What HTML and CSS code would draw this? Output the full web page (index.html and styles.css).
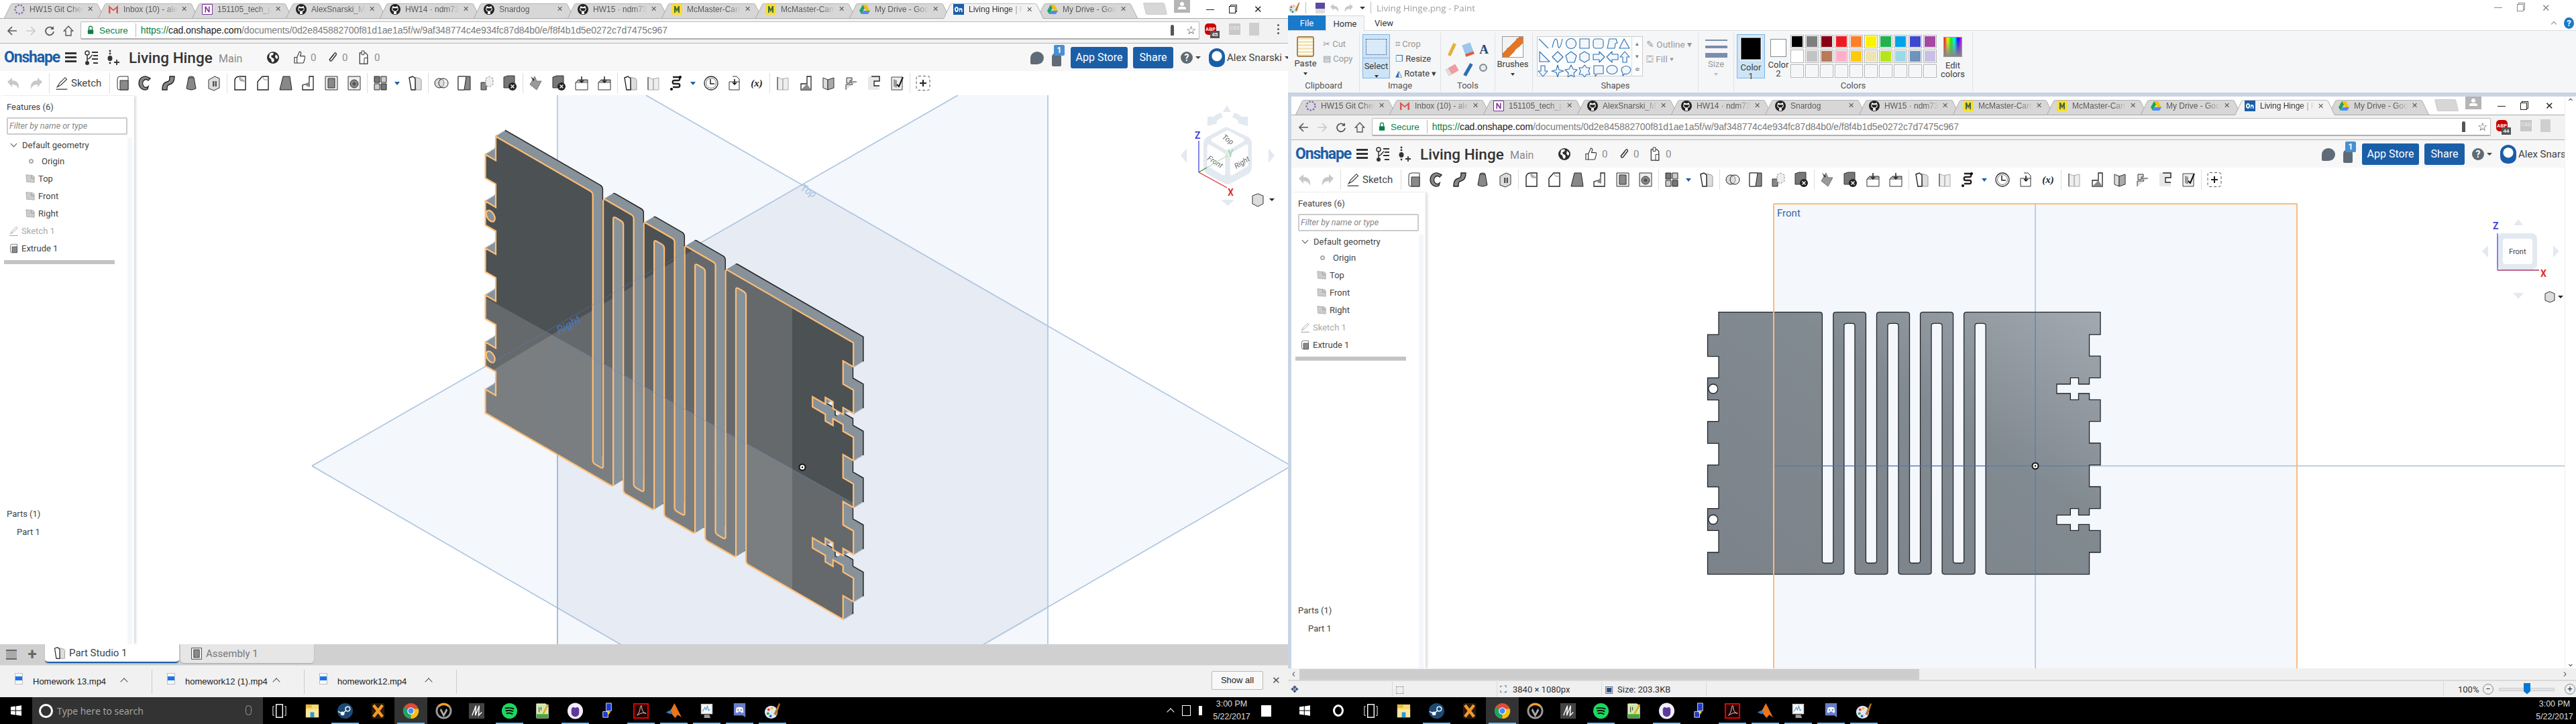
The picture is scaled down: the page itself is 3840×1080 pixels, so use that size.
FILE: index.html
```html
<!DOCTYPE html>
<html lang="en">
<head>
<meta charset="utf-8">
<title>Living Hinge</title>
<link rel="stylesheet" href="styles.css">
</head>
<body>
<svg class="defs" width="0" height="0">
<defs>
<linearGradient id="bodyGrad" x1="0" y1="1" x2="1" y2="0"><stop offset="0" stop-color="#7b8289"/><stop offset=".6" stop-color="#828a91"/><stop offset="1" stop-color="#a2a9b0"/></linearGradient>
<path id="hinge" transform="scale(.4337 .3333) translate(-143 -77)" vector-effect="non-scaling-stroke" fill-rule="evenodd" d="M143 77H489q10 0 10 10V1190q0 10 10 10H527q10 0 10-10V87q0-10 10-10H639q10 0 10 10V1190q0 10 10 10H676q10 0 10-10V87q0-10 10-10H789q10 0 10 10V1190q0 10 10 10H826q10 0 10-10V87q0-10 10-10H939q10 0 10 10V1190q0 10 10 10H976q10 0 10-10V87q0-10 10-10H1455V177H1417V273H1455V371H1417V399H1380V371H1352V399H1305V441H1352V469H1380V441H1417V469H1455V566H1417V663H1455V761H1417V858H1455V956H1417V985H1380V956H1352V985H1305V1027H1352V1054H1380V1027H1417V1054H1455V1152H1417V1250H1071q-10 0-10-10V137q0-10-10-10H1034q-10 0-10 10V1240q0 10-10 10H921q-10 0-10-10V137q0-10-10-10H884q-10 0-10 10V1240q0 10-10 10H771q-10 0-10-10V137q0-10-10-10H734q-10 0-10 10V1240q0 10-10 10H621q-10 0-10-10V137q0-10-10-10H584q-10 0-10 10V1240q0 10-10 10H105V1152H143V1054H105V956H143V859H105V761H143V664H105V566H143V470H105V371H143V275H105V177H143ZM108 420a16 21 0 1 0 32 0a16 21 0 1 0-32 0ZM108 1005a16 21 0 1 0 32 0a16 21 0 1 0-32 0Z"/>
<use id="isoFace" href="#hinge" transform="matrix(.937 .541 0 1.078 739 203.5)"/>
<clipPath id="faceClip"><use href="#hinge" transform="matrix(.937 .541 0 1.078 739 203.5)" clip-rule="evenodd"/></clipPath>

<symbol id="ext" viewBox="0 0 24 24"><path d="M4 6q0-4 4-4h12v20H7q-3 0-3-3z" fill="#fff" stroke="#333"/><path d="M8 8h12v14H8z" fill="#8a8a8a" stroke="#333"/></symbol>
<symbol id="rev" viewBox="0 0 24 24"><path d="M15 3a9 10 0 1 0 0 18l1-4a5 6 0 1 1 0-9l3-3z" fill="#888" stroke="#222" stroke-width="1.4"/></symbol>
<symbol id="swp" viewBox="0 0 24 24"><path d="M3 22c0-9 3-11 7-12s4-3 4-8h7c0 8-3 11-7 12s-4 3-4 8z" fill="#888" stroke="#222" stroke-width="1.4"/></symbol>
<symbol id="lft" viewBox="0 0 24 24"><ellipse cx="12" cy="4" rx="4" ry="2" fill="#bbb" stroke="#222"/><path d="M8 4 5 20q7 4 14 0L16 4z" fill="#888" stroke="#222"/></symbol>
<symbol id="thk" viewBox="0 0 24 24"><path d="M4 7l9-5 7 3v14l-8 4-8-3z" fill="#ddd" stroke="#333"/><path d="M10 9h6v8h-6z" fill="#555"/><path d="M13 9v8" stroke="#fff"/></symbol>
<symbol id="fil" viewBox="0 0 24 24"><path d="M4 22V9q0-7 7-7h9v20z" fill="#fff" stroke="#222" stroke-width="1.4"/><path d="M11 2v3q0 4 4 4h5" fill="#bbb" stroke="#888"/></symbol>
<symbol id="chm" viewBox="0 0 24 24"><path d="M4 22V10l7-8h9v20z" fill="#fff" stroke="#222" stroke-width="1.4"/><path d="M11 2l3 5h6" fill="none" stroke="#888"/></symbol>
<symbol id="drf" viewBox="0 0 24 24"><path d="M8 2h10l3 20H3z" fill="#888" stroke="#222"/></symbol>
<symbol id="rib" viewBox="0 0 24 24"><path d="M3 22V15l10-3V2h6v20z" fill="#fff" stroke="#222" stroke-width="1.3"/><path d="M8 16l6-10v12z" fill="#888"/></symbol>
<symbol id="shl" viewBox="0 0 24 24"><path d="M3 2h18v20H3z" fill="#eee" stroke="#333"/><path d="M7 5h10v14H7z" fill="#8a8a8a" stroke="#333"/></symbol>
<symbol id="hol" viewBox="0 0 24 24"><path d="M3 2h18v20H3z" fill="#eee" stroke="#333"/><circle cx="12" cy="13" r="6" fill="#888" stroke="#333"/><circle cx="12" cy="13" r="2.5" fill="#555"/></symbol>
<symbol id="grd" viewBox="0 0 24 24"><path d="M3 2h8v9H3z" fill="#777" stroke="#222"/><path d="M13 2h8v9h-8z" fill="#ccc" stroke="#222"/><path d="M3 13h8v9H3z" fill="#ccc" stroke="#222"/><path d="M13 13h8v9h-8z" fill="#777" stroke="#222"/></symbol>
<symbol id="prt" viewBox="0 0 24 24"><path d="M11 3l8 2q2 1 2 3v14h-8z" fill="#ddd" stroke="#999"/><path d="M3 4l5-2 4 3v17H6z" fill="#fff" stroke="#222" stroke-width="1.4"/></symbol>
<symbol id="boo" viewBox="0 0 24 24"><circle cx="9" cy="12" r="7" fill="#ddd" stroke="#222"/><circle cx="15" cy="12" r="7" fill="#ddd" fill-opacity=".5" stroke="#222"/></symbol>
<symbol id="spl" viewBox="0 0 24 24"><path d="M3 2h18v20H3z" fill="#888" stroke="#222"/><path d="M3 2h12l-3 20H3z" fill="#fff" stroke="#222"/></symbol>
<symbol id="xfm" viewBox="0 0 24 24"><path d="M3 11h8v11H3z" fill="#888" stroke="#333"/><path d="M10 5l5-3 6 3v9l-6 4-5-3z" fill="#eee" stroke="#888" stroke-dasharray="3 2"/></symbol>
<symbol id="del" viewBox="0 0 24 24"><path d="M3 3l6-2h10v18H3z" fill="#777" stroke="#333"/><circle cx="16" cy="17" r="6" fill="#222"/><path d="M13.500 14.500l5 5m0-5l-5 5" stroke="#fff" stroke-width="1.4"/></symbol>
<symbol id="bnd" viewBox="0 0 24 24"><path d="M3 14l7-12 3 7 7 0-7 13z" fill="#999" stroke="#777"/><path d="M4 2l6 5-2 2z" fill="#333"/></symbol>
<symbol id="imp" viewBox="0 0 24 24"><path d="M3 11h18v11H3z" fill="#fff" stroke="#333"/><path d="M3 11l4-4h14v4" fill="#aaa" stroke="#333"/><path d="M12 2v9m-3-3 3 3 3-3" stroke="#222" fill="none" stroke-width="1.5"/></symbol>
<symbol id="plk" viewBox="0 0 24 24"><path d="M4 22V3l6 3 10-2v18z" fill="#eee" stroke="#aaa"/><path d="M4 3v19" stroke="#333"/><path d="M12 6v16" stroke="#888"/></symbol>
<symbol id="ser" viewBox="0 0 24 24"><path d="M7 3h8c3 0 3 5 0 5H9c-3 0-3 5 0 5h6c3 0 3 5 0 5H7" fill="none" stroke="#222" stroke-width="2.4"/><circle cx="5" cy="21" r="2"/><circle cx="18" cy="3" r="2"/></symbol>
<symbol id="clk" viewBox="0 0 24 24"><circle cx="12" cy="12" r="10" fill="#fff" stroke="#333" stroke-width="1.3"/><circle cx="12" cy="12" r="7.500" fill="none" stroke="#777"/><path d="M11 6v7h6" fill="none" stroke="#222" stroke-width="1.5"/></symbol>
<symbol id="mat" viewBox="0 0 24 24"><path d="M5 10h15v12H5z" fill="#fff" stroke="#333"/><path d="M10 2h6l4 4v5" fill="none" stroke="#333"/><path d="M13 6v8m-3-3 3 3 3-3" stroke="#111" stroke-width="1.5" fill="none"/></symbol>
<symbol id="smb" viewBox="0 0 24 24"><path d="M4 4l7 3v15l-7-3z" fill="#ddd" stroke="#333"/><path d="M11 7l9-3v15l-9 3z" fill="#aaa" stroke="#333"/></symbol>
<symbol id="cnr" viewBox="0 0 24 24"><path d="M5 13h9V2h6v20H5z" fill="#fff" stroke="#222" stroke-width="1.3"/><path d="M14 13l6 9H5z" fill="#888"/></symbol>
<symbol id="tab" viewBox="0 0 24 24"><path d="M5 12V4h8v4h-3v4zM4 22v-8h10l-3-4h9" fill="#e2e2e2" stroke="#333"/></symbol>
<symbol id="hem" viewBox="0 0 24 24"><path d="M3 2h17v7H11v6h9v7H3z" fill="#e8e8e8"/><path d="M8 2h12v7h-8v7h8" fill="none" stroke="#222" stroke-width="1.4"/></symbol>
<symbol id="cut" viewBox="0 0 24 24"><path d="M4 3h16v19H4z" fill="#eee" stroke="#444"/><path d="M7 6l5 2 0 11-5-2z" fill="#999"/><path d="M12 14l3 3 6-14" fill="none" stroke="#111" stroke-width="2"/></symbol>
<symbol id="plus" viewBox="0 0 24 24"><rect x="2" y="1.500" width="20" height="21" rx="3" fill="none" stroke="#555" stroke-dasharray="4 3"/><path d="M12 7v10M7 12h10" stroke="#222" stroke-width="2"/></symbol>
<symbol id="pen" viewBox="0 0 24 24"><path d="M4 19 8 12 18 2l3 3L11 15z" fill="none" stroke="#333" stroke-width="1.3"/><path d="M2 23h20" stroke="#333" stroke-width="1.5"/></symbol>
<symbol id="undo" viewBox="0 0 24 24"><path d="M3 10l7-6v4c7 0 11 4 10 13-2-5-5-7-10-7v4z" fill="#c8c8c8"/></symbol>
<symbol id="redo" viewBox="0 0 24 24"><path d="M21 10l-7-6v4C7 8 3 12 4 21c2-5 5-7 10-7v4z" fill="#c8c8c8"/></symbol>
<symbol id="plane" viewBox="0 0 16 16"><path d="M1 2l11 1 3 2v10L2 14z" fill="#ccc" stroke="#aaa"/><path d="M10 3v5h5" fill="none" stroke="#999"/></symbol>
<symbol id="tre" viewBox="0 0 22 24"><circle cx="5" cy="5" r="3" fill="none" stroke="#333" stroke-width="1.500"/><circle cx="5" cy="20" r="3" fill="#333"/><path d="M5 8v9M5 14c5 0 5-5 8-6" fill="none" stroke="#333" stroke-width="1.500"/><path d="M12 4h9M14 9h7M12 14h9M14 20h7" stroke="#333" stroke-width="1.800"/></symbol>
<symbol id="dpl" viewBox="0 0 22 24"><circle cx="6" cy="2" r="1.400" fill="#333"/><circle cx="6" cy="6" r="1.400" fill="#333"/><ellipse cx="6" cy="13" rx="3.500" ry="4" fill="#333"/><circle cx="6" cy="20" r="1.400" fill="#333"/><path d="M16 15v8M12 19h8" stroke="#333" stroke-width="1.800"/></symbol>
<symbol id="glb" viewBox="0 0 18 18"><circle cx="9" cy="9" r="9" fill="#2e2e2e"/><path d="M4 3q3-2 6-1l-1 3-3 1 1 3 3 1 1 3-2 3-2-1-1-4-3-2zM13 4l3 3v3l-2 1-2-3z" fill="#fff"/></symbol>
<symbol id="thb" viewBox="0 0 18 22"><path d="M1 11h4v9H1zM5 11l4-9c2 0 3 2 2 4l-1 3h6c1.500 0 2 1 1.500 3l-2 7c-.3 1-1 1-2 1H5" fill="#fff" stroke="#333" stroke-width="1.200"/></symbol>
<symbol id="lnk" viewBox="0 0 16 22"><path d="M3 15 11 5c2-2 4 0 3 2l-7 9c-2 2-4 0-3-2l6-7" fill="none" stroke="#333" stroke-width="1.500"/></symbol>
<symbol id="clp" viewBox="0 0 16 22"><path d="M2 4h9l3 3v14H2z" fill="#fff" stroke="#333" stroke-width="1.300"/><path d="M5 1h4v6H5zM9 12h5v9H9z" fill="#fff" stroke="#333"/></symbol>

<symbol id="gh" viewBox="0 0 16 16"><circle cx="8" cy="8" r="8" fill="#222"/><path d="M3.500 6l1-3 2.500 1.200h2L11.500 3l1 3c1 3-1 5-3 5.300l.5 1V15H6v-2.700l.5-1C4.500 11 2.500 9 3.500 6z" fill="#fff"/><path d="M4.200 6.200c-.3 2.800 1.500 4.400 3.800 4.400s4.100-1.600 3.800-4.400z" fill="#222"/></symbol>
<symbol id="drv" viewBox="0 0 16 16"><path d="M5 1h6l5 9h-6z" fill="#f4c20d"/><path d="M5 1 0 10l3 5 5-9z" fill="#1da462"/><path d="M3 15h10l3-5H6z" fill="#4c8bf5"/></symbol>
<symbol id="mcm" viewBox="0 0 16 16"><rect width="16" height="16" rx="3" fill="#fddc2f"/><path d="M4 13V3h2l2 5 2-5h2v10h-2V8l-2 4-2-4v5z" fill="#3a6a3a"/></symbol>
<symbol id="gml" viewBox="0 0 16 16"><path d="M1 14V2l7 6 7-6v12h-2.500V6.500L8 10.500 3.500 6.500V14z" fill="#d9584e"/></symbol>
<symbol id="one" viewBox="0 0 16 16"><path d="M.5.500h15v15H.5z" fill="#fff" stroke="#7a2f95"/><path d="M4.500 12.500v-9H6l4 6v-6h1.500v9H10l-4-6v6z" fill="#7a2f95"/></symbol>
<symbol id="git" viewBox="0 0 16 16"><circle cx="8" cy="8" r="6.500" fill="none" stroke="#7b5bb5" stroke-width="2" stroke-dasharray="2.500 2"/></symbol>
<symbol id="ons" viewBox="0 0 16 16"><rect width="16" height="16" fill="#1b5ea8"/><path d="M5 4a3 4 0 1 0 .01 0zM5 6a1.200 2 0 1 1-.01 0z" fill="#fff"/><path d="M9 12V6h1.500v1c1-1.500 3-1 3 1v4h-1.500V9c0-1-1.500-1-2 0v3z" fill="#fff"/></symbol>
<symbol id="back" viewBox="0 0 16 16"><path d="M15 8H3m5-6L2 8l6 6" fill="none" stroke="currentColor" stroke-width="1.700"/></symbol>
<symbol id="fwd" viewBox="0 0 16 16"><path d="M1 8h12M8 2l6 6-6 6" fill="none" stroke="currentColor" stroke-width="1.700"/></symbol>
<symbol id="rel" viewBox="0 0 16 16"><path d="M13 5a6 6 0 1 0 1 4" fill="none" stroke="currentColor" stroke-width="1.800"/><path d="M14 1v5H9z" fill="currentColor"/></symbol>
<symbol id="hom" viewBox="0 0 16 16"><path d="M8 1 1.500 8H4v7h8V8h2.500z" fill="none" stroke="currentColor" stroke-width="1.400"/></symbol>
<symbol id="lock" viewBox="0 0 12 16"><path d="M3 7V4a3 3 0 0 1 6 0v3" fill="none" stroke="#0b8043" stroke-width="1.500"/><rect x="1" y="7" width="10" height="8" rx="1" fill="#0b8043"/></symbol>

<symbol id="win" viewBox="0 0 16 16"><path d="M0 2.500 6.800 1.500v6H0zM7.800 1.400 16 .2v7.300H7.800zM0 8.500h6.800v6L0 13.500zM7.800 8.500H16v7.300l-8.200-1.200z" fill="#fff"/></symbol>
<symbol id="tv" viewBox="0 0 26 26"><rect x="8" y="3" width="10" height="20" fill="none" stroke="#fff" stroke-width="1.500"/><path d="M5 6H3v14h2M21 6h2v14h-2" fill="none" stroke="#fff"/></symbol>
<symbol id="exp" viewBox="0 0 26 26"><path d="M3 3h20v20H3z" fill="#f8d775"/><path d="M3 3h9v5H3z" fill="#e8b93c"/><path d="M3 10h20v13H3z" fill="#ffe79a"/><path d="M10 15h6v8h-6z" fill="#2b9ad7"/></symbol>
<symbol id="stm" viewBox="0 0 26 26"><circle cx="13" cy="13" r="12" fill="#1c4a75"/><circle cx="17" cy="10" r="3.500" fill="none" stroke="#fff" stroke-width="1.500"/><circle cx="9" cy="17" r="3" fill="#fff"/><path d="M2 14l7 3 6-5" fill="none" stroke="#fff" stroke-width="1.500"/></symbol>
<symbol id="xxx" viewBox="0 0 26 26"><rect x="3" y="1" width="20" height="24" rx="2" fill="#2a1a0a"/><path d="M6 4l14 18M20 4 6 22" stroke="#f39a2b" stroke-width="4.500"/></symbol>
<symbol id="chr" viewBox="0 0 26 26"><circle cx="13" cy="13" r="12" fill="#dd4b39"/><path d="M13 13 2.500 19A12 12 0 0 0 13 25z" fill="#1da462"/><path d="M13 13 13 25A12 12 0 0 0 24.800 10H13z" fill="#f4c20d"/><path d="M13 13 2.600 7A12 12 0 0 0 2.500 19z" fill="#1da462"/><circle cx="13" cy="13" r="5.500" fill="#fff"/><circle cx="13" cy="13" r="4.300" fill="#4c8bf5"/></symbol>
<symbol id="ovw" viewBox="0 0 26 26"><circle cx="13" cy="13" r="11" fill="none" stroke="#999" stroke-width="3"/><path d="M5 6a11 11 0 0 1 16 0" fill="none" stroke="#f99e1a" stroke-width="3"/><path d="M9 9l4 8 4-8 2 3-6 11-6-11z" fill="#aaa"/></symbol>
<symbol id="wac" viewBox="0 0 26 26"><rect x="1" y="1" width="24" height="24" fill="#444"/><path d="M6 20 12 5l-1 15 6-15-1 15 5-5" fill="none" stroke="#fff" stroke-width="1.500"/></symbol>
<symbol id="spo" viewBox="0 0 26 26"><circle cx="13" cy="13" r="12" fill="#1ed760"/><path d="M6 9q7-2 14 1M7 13q6-2 12 1M8 17q5-1.500 10 1" fill="none" stroke="#111" stroke-width="2"/></symbol>
<symbol id="ntp" viewBox="0 0 26 26"><path d="M4 2h14l4 4v18H4z" fill="#cfe8a8" stroke="#fff"/><path d="M4 18h18v6H4z" fill="#4aa53a"/><path d="M14 18 22 3" stroke="#e8a71c" stroke-width="2.500"/><path d="M8 7v8M11 7v5" stroke="#333"/></symbol>
<symbol id="pur" viewBox="0 0 26 26"><ellipse cx="13" cy="13" rx="12" ry="12.500" fill="#f2eefb"/><path d="M7 10l2-3 4 1 4-1 2 3v6a6 6 0 0 1-12 0z" fill="#5b3a99"/></symbol>
<symbol id="net" viewBox="0 0 26 26"><path d="M10 1h8v12h-8z" fill="#1b3bd0" stroke="#ddd"/><path d="M5 14h8v9H5z" fill="#1b3bd0" stroke="#ddd"/><path d="M15 11l-4 5h3l-2 5 5-7h-3z" fill="#ffe100"/></symbol>
<symbol id="acr" viewBox="0 0 26 26"><rect x="2" y="2" width="22" height="22" fill="#200" stroke="#e00" stroke-width="2"/><path d="M13 5c-2 0 0 8-6 15 5-4 11-5 14-3-5-1-7-6-7-12z" fill="none" stroke="#ddd"/></symbol>
<symbol id="mlb" viewBox="0 0 26 26"><path d="M1 15l7-3 6-11 4 8 7 14-6-4-4 5-6-7z" fill="#e8761d"/><path d="M1 15l7-3 3 4-4 2z" fill="#2f7ec5"/></symbol>
<symbol id="rmn" viewBox="0 0 26 26"><path d="M4 2h18v16H4z" fill="#ddd"/><path d="M6 4h14v12H6z" fill="#fff"/><path d="M7 14l3-7 2 5 2-7 2 8 2-3" fill="none" stroke="#2b7fc1"/><path d="M9 19h8l2 5H9z" fill="#999"/></symbol>
<symbol id="dsc" viewBox="0 0 26 26"><path d="M4 1h18v22l-4-3H4z" fill="#6a7fc9"/><path d="M8 8q5-2 10 0l1 7-3 1-1-2h-4l-1 2-3-1z" fill="#fff"/><circle cx="10.500" cy="11.500" r="1.300" fill="#6a7fc9"/><circle cx="15.500" cy="11.500" r="1.300" fill="#6a7fc9"/></symbol>
<symbol id="pnt" viewBox="0 0 26 26"><ellipse cx="11" cy="15" rx="10" ry="10" fill="#dfe7f2"/><circle cx="7" cy="11" r="2" fill="#e33"/><circle cx="12" cy="9" r="2" fill="#fb3"/><circle cx="6" cy="17" r="2" fill="#2a4"/><circle cx="10" cy="21" r="2" fill="#26c"/><path d="M15 18 23 1l2 1-6 18z" fill="#b5762a"/></symbol>
</defs>
</svg>

<div class="screen">

<!-- LEFT WINDOW -->
<div class="win">
 <div class="chrome">
  <div class="tabs">
   <div class="tab"><svg class="fav"><use href="#git"/></svg><span class="tt">HW15 Git Chec</span><span class="tx">✕</span></div>
   <div class="tab"><svg class="fav"><use href="#gml"/></svg><span class="tt">Inbox (10) - ale</span><span class="tx">✕</span></div>
   <div class="tab"><svg class="fav"><use href="#one"/></svg><span class="tt">151105_tech_p</span><span class="tx">✕</span></div>
   <div class="tab"><svg class="fav"><use href="#gh"/></svg><span class="tt">AlexSnarski_ME</span><span class="tx">✕</span></div>
   <div class="tab"><svg class="fav"><use href="#gh"/></svg><span class="tt">HW14 · ndm73</span><span class="tx">✕</span></div>
   <div class="tab"><svg class="fav"><use href="#gh"/></svg><span class="tt">Snardog</span><span class="tx">✕</span></div>
   <div class="tab"><svg class="fav"><use href="#gh"/></svg><span class="tt">HW15 · ndm73</span><span class="tx">✕</span></div>
   <div class="tab"><svg class="fav"><use href="#mcm"/></svg><span class="tt">McMaster-Carr</span><span class="tx">✕</span></div>
   <div class="tab"><svg class="fav"><use href="#mcm"/></svg><span class="tt">McMaster-Carr</span><span class="tx">✕</span></div>
   <div class="tab"><svg class="fav"><use href="#drv"/></svg><span class="tt">My Drive - Goo</span><span class="tx">✕</span></div>
   <div class="tab active"><svg class="fav"><use href="#ons"/></svg><span class="tt">Living Hinge | F</span><span class="tx">✕</span></div>
   <div class="tab"><svg class="fav"><use href="#drv"/></svg><span class="tt">My Drive - Goo</span><span class="tx">✕</span></div>
   <div class="newtab"></div>
   <div class="profile"><span class="phead"></span><span class="pbody"></span></div>
   <div class="winbtns"><span class="wmin"></span><span class="wmax"></span><span class="wx">✕</span></div>
  </div>
  <div class="addr">
   <svg class="nav"><use href="#back"/></svg><svg class="nav off"><use href="#fwd"/></svg><svg class="nav"><use href="#rel"/></svg><svg class="nav"><use href="#hom"/></svg>
   <div class="omni">
    <svg class="lock"><use href="#lock"/></svg><span class="secure">Secure</span><span class="usep"></span>
    <span class="url"><b class="g">https://</b><b class="d">cad.onshape.com</b>/documents/0d2e845882700f81d1ae1a5f/w/9af348774c4e934fc87d84b0/e/f8f4b1d5e0272c7d7475c967</span>
    <span class="key"></span><span class="star">☆</span>
   </div>
   <div class="ext"><span class="abp">ABP<i>45</i></span><span class="css">CSS</span><span class="pdf"></span><span class="dots"></span></div>
  </div>
  <div class="ohead">
   <span class="logo">Onshape</span>
   <span class="burger"></span>
   <svg class="hi"><use href="#tre"/></svg>
   <svg class="hi"><use href="#dpl"/></svg>
   <span class="doc">Living Hinge</span><span class="main">Main</span>
   <svg class="globe"><use href="#glb"/></svg>
   <svg class="thumb"><use href="#thb"/></svg><span class="cnt">0</span>
   <svg class="link"><use href="#lnk"/></svg><span class="cnt">0</span>
   <svg class="clip"><use href="#clp"/></svg><span class="cnt">0</span>
   <div class="oright">
    <span class="chat"></span>
    <span class="bell"><i>1</i></span>
    <span class="obtn">App Store</span><span class="obtn share">Share</span>
    <span class="help">?</span><span class="caret"></span>
    <span class="avatar"></span><span class="user">Alex Snarski</span><span class="caret"></span>
   </div>
  </div>
  <div class="tools">
   <svg class="ti"><use href="#undo"/></svg><svg class="ti"><use href="#redo"/></svg><i class="sep"></i>
   <span class="sk"><svg class="skp"><use href="#pen"/></svg>Sketch</span><i class="sep"></i>
   <svg class="ti"><use href="#ext"/></svg><svg class="ti"><use href="#rev"/></svg><svg class="ti"><use href="#swp"/></svg><svg class="ti"><use href="#lft"/></svg><svg class="ti"><use href="#thk"/></svg><i class="sep"></i>
   <svg class="ti"><use href="#fil"/></svg><svg class="ti"><use href="#chm"/></svg><svg class="ti"><use href="#drf"/></svg><svg class="ti"><use href="#rib"/></svg><svg class="ti"><use href="#shl"/></svg><svg class="ti"><use href="#hol"/></svg><i class="sep"></i>
   <svg class="ti"><use href="#grd"/></svg><span class="bc"></span><svg class="ti"><use href="#prt"/></svg><i class="sep"></i>
   <svg class="ti"><use href="#boo"/></svg><svg class="ti"><use href="#spl"/></svg><svg class="ti"><use href="#xfm"/></svg><svg class="ti"><use href="#del"/></svg><i class="sep"></i>
   <svg class="ti"><use href="#bnd"/></svg><svg class="ti"><use href="#del"/></svg><svg class="ti"><use href="#imp"/></svg><svg class="ti"><use href="#imp"/></svg><i class="sep"></i>
   <svg class="ti"><use href="#prt"/></svg><svg class="ti"><use href="#plk"/></svg><svg class="ti"><use href="#ser"/></svg><span class="bc"></span><svg class="ti"><use href="#clk"/></svg><svg class="ti"><use href="#mat"/></svg><span class="ti fx">(x)</span><i class="sep"></i>
   <svg class="ti"><use href="#plk"/></svg><svg class="ti"><use href="#cnr"/></svg><svg class="ti"><use href="#smb"/></svg><svg class="ti"><use href="#tab"/></svg><svg class="ti"><use href="#hem"/></svg><svg class="ti"><use href="#cut"/></svg><i class="sep"></i>
   <svg class="ti"><use href="#plus"/></svg>
  </div>
  <div class="viewport">
   <svg class="canvas" viewBox="0 142 1920 819" width="1920" height="819">
    <rect x="831" y="142" width="731" height="819" fill="#f4f7fb"/>
    <path d="M963 142H1428L1196 275Z" fill="#fff"/>
    <path d="M465 695 1196 275 1925 695 1196 1118Z" fill="#f4f7fb"/>
    <path d="M831 484.500 1196 275 1562 485V908L1196 1118 831 908Z" fill="#e6ebf4"/>
    <g fill="none" stroke="#a8c1df" stroke-width="1.500"><path d="M465 695 1428 142M963 142 1925 695M465 695 1196 1118 1925 695M831 142V961M1562 142V961"/></g>
    <text class="pl" transform="translate(1192 283) rotate(30)" fill="#9db8da">Top</text>

    <g fill="#88929a" stroke="#88929a" stroke-width="1.500">
     <use href="#isoFace" x="14.700" y="-8.900" stroke="#222"/>
     <use href="#isoFace" x="12.900" y="-7.800"/><use href="#isoFace" x="11" y="-6.700"/><use href="#isoFace" x="9.200" y="-5.600"/><use href="#isoFace" x="7.400" y="-4.500"/><use href="#isoFace" x="5.500" y="-3.300"/><use href="#isoFace" x="3.700" y="-2.200"/><use href="#isoFace" x="1.800" y="-1.100"/>
    </g>
    <use href="#isoFace" fill="#4c5154" stroke="none"/>
    <g clip-path="url(#faceClip)" fill="#fff" fill-opacity=".14">
     <path d="M700 573 1181 284V1000H700Z"/>
     <path d="M700 431 1420 833V1000H700Z"/>
    </g>
    <use href="#isoFace" fill="none" stroke="#ffbe74" stroke-width="2.200"/>
    <path d="M723 547 1022 375M815 496 1270 750M831 496V961" fill="none" stroke="#5b84bd" stroke-opacity=".45"/>
    <text class="pl rgt" transform="translate(834 499) rotate(-30)">Right</text>
    <circle cx="1196" cy="697" r="4.500" fill="#fff" stroke="#111" stroke-width="2"/><circle cx="1196" cy="697" r="1.300" fill="#111"/>

    <g class="vc">
     <path d="M1829 157l6 10h-12zM1760 232l9-11v22zM1900 232l-9-11v22zM1830 307l-10-9h20z" fill="#e3e9f0"/>
     <path d="M1800 192v-14h9l-2 3q5-7 13-9l3 7q-7 2-10 7l2 2zM1860 192v-14h-9l2 3q-5-7-13-9l-3 7q7 2 10 7l-2 2z" fill="#e3e9f0" transform="translate(0 -4)"/>
     <path d="M1830 190l30 14q6 4 6 10v36q0 6-6 10l-26 14q-4 2-8 0l-26-14q-6-4-6-10v-36q0-6 6-10l26-14q2-1 4 0z" fill="#e3e9f0"/>
     <path d="M1830 197l22 12-22 13-22-13zM1802 218l22 13v28l-22-13zM1858 218l-22 13v28l22-13z" fill="#fff" stroke="#fff" stroke-width="5" stroke-linejoin="round"/>
     <text class="vct" transform="translate(1821 206) rotate(35)">Top</text>
     <text class="vct" transform="translate(1799 238) rotate(32)">Front</text>
     <text class="vct" transform="translate(1843 252) rotate(-32)">Right</text>
     <path d="M1787 257V210" stroke="#4444dd" stroke-width="1.300"/><path d="M1787 257 1829 280" stroke="#e02b2b" stroke-width="1.300"/><path d="M1787 257 1799 250" stroke="#2a9a2a" stroke-width="1.300"/><path d="M1799 250 1830 232" stroke="#b8e0b8" stroke-width="1.300"/>
     <text class="axs" x="1781" y="207" fill="#4444dd">Z</text><text class="axs" x="1830" y="234" fill="#a8d8a8">Y</text><text class="axs" x="1830" y="292" fill="#e02b2b">X</text>
     <path d="M1867 292l8-3 8 3v12l-8 4-8-4z" fill="#ddd" stroke="#333"/><path d="M1892 296h8l-4 4z" fill="#222"/>
    </g>
   </svg>
   <aside class="side">
    <div class="sh">Features (6)</div>
    <div class="filter">Filter by name or type</div>
    <div class="scrl"></div>
    <div class="row first"><span class="chev"></span>Default geometry</div>
    <div class="row sub"><i class="orig"></i>Origin</div>
    <div class="row sub"><svg class="pi"><use href="#plane"/></svg>Top</div>
    <div class="row sub"><svg class="pi"><use href="#plane"/></svg>Front</div>
    <div class="row sub"><svg class="pi"><use href="#plane"/></svg>Right</div>
    <div class="row top dim"><svg class="fi"><use href="#pen"/></svg>Sketch 1</div>
    <div class="row top"><svg class="fi"><use href="#ext"/></svg>Extrude 1</div>
    <div class="hbar"></div>
    <div class="parts">Parts (1)</div>
    <div class="row part">Part 1</div>
   </aside>
  </div>
  <div class="sheets">
   <span class="sq"></span><span class="sp">+</span>
   <div class="stab on"><svg class="si"><use href="#prt"/></svg>Part Studio 1</div>
   <div class="stab"><svg class="si"><use href="#shl"/></svg>Assembly 1</div>
  </div>
  <div class="dl">
   <div class="dli"><span class="file"></span><span class="dn">Homework 13.mp4</span><span class="up"></span></div>
   <div class="dli"><span class="file"></span><span class="dn">homework12 (1).mp4</span><span class="up"></span></div>
   <div class="dli"><span class="file"></span><span class="dn">homework12.mp4</span><span class="up"></span></div>
   <span class="showall">Show all</span><span class="dlx">✕</span>
  </div>
 </div>
 <div class="taskbar">
  <span class="tk"><svg class="wi"><use href="#win"/></svg></span>
  <div class="search"><span class="cort"></span><span class="stxt">Type here to search</span><span class="mic"></span></div>
  <span class="tk"><svg><use href="#tv"/></svg></span>
  <span class="tk"><svg><use href="#exp"/></svg></span>
  <span class="tk run"><svg><use href="#stm"/></svg></span>
  <span class="tk"><svg><use href="#xxx"/></svg></span>
  <span class="tk run cur"><svg><use href="#chr"/></svg></span>
  <span class="tk"><svg><use href="#ovw"/></svg></span>
  <span class="tk"><svg><use href="#wac"/></svg></span>
  <span class="tk run"><svg><use href="#spo"/></svg></span>
  <span class="tk"><svg><use href="#ntp"/></svg></span>
  <span class="tk run"><svg><use href="#pur"/></svg></span>
  <span class="tk"><svg><use href="#net"/></svg></span>
  <span class="tk run"><svg><use href="#acr"/></svg></span>
  <span class="tk run"><svg><use href="#mlb"/></svg></span>
  <span class="tk run"><svg><use href="#rmn"/></svg></span>
  <span class="tk run"><svg><use href="#dsc"/></svg></span>
  <span class="tk run"><svg><use href="#pnt"/></svg></span>
  <div class="tray"><span class="tup"></span><span class="tnet"></span><span class="tvol"></span><div class="clock"><span>3:00 PM</span><span>5/22/2017</span></div><span class="note"></span></div>
 </div>
</div>

<!-- RIGHT WINDOW: PAINT -->
<div class="win paint">
 <div class="ptitle">
  <svg class="qa"><use href="#pnt"/></svg><i class="qs"></i>
  <span class="qsave"></span><svg class="qb"><use href="#undo"/></svg><svg class="qb"><use href="#redo"/></svg><span class="qc"></span><i class="qs"></i>
  <span class="pname">Living Hinge.png - Paint</span>
  <div class="pctl"><span class="wmin"></span><span class="wmax"></span><span class="wx">✕</span></div>
 </div>
 <div class="rtabs"><span class="file-tab">File</span><span class="rt on">Home</span><span class="rt">View</span><span class="rup"></span><span class="rq">?</span></div>
 <div class="ribbon">
  <section class="grp g1">
   <div class="gb clipb">
    <div class="big"><span class="paste"></span><span>Paste</span><i class="dn2"></i></div>
    <div class="small dimt"><div>✂ Cut</div><div>▤ Copy</div></div>
   </div>
   <label>Clipboard</label>
  </section>
  <section class="grp g2">
   <div class="gb">
    <div class="sel"><div class="selt"><span></span></div><div class="selb">Select<i class="dn2"></i></div></div>
    <div class="small"><div class="dimt">⌗ Crop</div><div><span class="ib">❐</span> Resize</div><div><span class="ib">◭</span> Rotate ▾</div></div>
   </div>
   <label>Image</label>
  </section>
  <section class="grp g3">
   <div class="gb toolgrid"><span class="c-pen"></span><span class="c-fill"></span><span class="c-a">A</span><span class="c-era"></span><span class="c-drop"></span><span class="c-mag"></span></div>
   <label>Tools</label>
  </section>
  <section class="grp g4">
   <div class="gb"><div class="big"><span class="brush"></span><span>Brushes</span><i class="dn2"></i></div></div>
   <label>&nbsp;</label>
  </section>
  <section class="grp g5">
   <div class="gb">
    <div class="gallery">
     <svg class="shapes" viewBox="0 0 140 60" width="140" height="60"><g fill="#f3f7fc" stroke="#2a6fb0" stroke-width="1.100" stroke-linejoin="round">
      <path d="M2 3 16 17" fill="none"/><path d="M22 16c3-16 7-16 8-6s4 8 7-7" fill="none"/><circle cx="50" cy="10" r="7.500"/><rect x="63" y="3" width="14" height="14"/><rect x="83" y="3" width="15" height="14" rx="4"/><path d="M104 17l3-14h10l2 6-3 1-1 7z"/><path d="M131 3l8 14h-15z" transform="translate(-2 0)"/>
      <path d="M3 22v15h15z"/><path d="M30 22l8 8-8 8-8-8z"/><path d="M50 22l8 6-3 10H45l-3-10z"/><path d="M70 22l7 4v8l-7 4-7-4v-8z"/><path d="M83 26h9v-4l8 8-8 8v-4h-9z"/><path d="M120 26h-9v-4l-8 8 8 8v-4h9z"/><path d="M130 22l7 8h-4v8h-6v-8h-4z"/>
      <path d="M5 43h6v8h4l-7 8-7-8h4z"/><path d="M30 42l2 7 7 2-7 2-2 7-2-7-7-2 7-2z"/><path d="M50 42l3 6 6 1-5 5 1 6-5-3-5 3 1-6-5-5 6-1z"/><path d="M70 42l3 4h5l-2 5 2 5h-5l-3 4-3-4h-5l2-5-2-5h5z"/><path d="M84 43h14v12h-9l-3 4v-4h-2z"/><ellipse cx="111" cy="49" rx="8" ry="6.500"/><path d="M126 46q6-5 12 0 2 4-1 7-3 4-7 2l-3 3v-4q-3-4-1-8z"/></g></svg>
     <div class="gscroll"><i>▴</i><i>▾</i><i>≑</i></div>
    </div>
    <div class="small dimt outl"><div>✎ Outline ▾</div><div>⛋ Fill ▾</div></div>
   </div>
   <label>Shapes</label>
  </section>
  <section class="grp g6">
   <div class="gb"><div class="big dimt"><span class="sizes"><i></i><i></i><i></i></span><span>Size</span><i class="dn2 lt"></i></div></div>
   <label>&nbsp;</label>
  </section>
  <section class="grp g7">
   <div class="gb">
    <div class="col1"><span class="sw black"></span><span>Color<br>1</span></div>
    <div class="col2"><span class="sw white"></span><span>Color<br>2</span></div>
    <div class="pal">
     <i class="c01"></i><i class="c02"></i><i class="c03"></i><i class="c04"></i><i class="c05"></i><i class="c06"></i><i class="c07"></i><i class="c08"></i><i class="c09"></i><i class="c10"></i>
     <i class="c11"></i><i class="c12"></i><i class="c13"></i><i class="c14"></i><i class="c15"></i><i class="c16"></i><i class="c17"></i><i class="c18"></i><i class="c19"></i><i class="c20"></i>
     <i></i><i></i><i></i><i></i><i></i><i></i><i></i><i></i><i></i><i></i>
    </div>
    <div class="edit"><span class="rainbow"></span><span>Edit<br>colors</span></div>
   </div>
   <label>Colors</label>
  </section>
 </div>
 <div class="work">
  <div class="chrome nested">
   <div class="tabs">
    <div class="tab"><svg class="fav"><use href="#git"/></svg><span class="tt">HW15 Git Chec</span><span class="tx">✕</span></div>
    <div class="tab"><svg class="fav"><use href="#gml"/></svg><span class="tt">Inbox (10) - ale</span><span class="tx">✕</span></div>
    <div class="tab"><svg class="fav"><use href="#one"/></svg><span class="tt">151105_tech_p</span><span class="tx">✕</span></div>
    <div class="tab"><svg class="fav"><use href="#gh"/></svg><span class="tt">AlexSnarski_ME</span><span class="tx">✕</span></div>
    <div class="tab"><svg class="fav"><use href="#gh"/></svg><span class="tt">HW14 · ndm73</span><span class="tx">✕</span></div>
    <div class="tab"><svg class="fav"><use href="#gh"/></svg><span class="tt">Snardog</span><span class="tx">✕</span></div>
    <div class="tab"><svg class="fav"><use href="#gh"/></svg><span class="tt">HW15 · ndm73</span><span class="tx">✕</span></div>
    <div class="tab"><svg class="fav"><use href="#mcm"/></svg><span class="tt">McMaster-Carr</span><span class="tx">✕</span></div>
    <div class="tab"><svg class="fav"><use href="#mcm"/></svg><span class="tt">McMaster-Carr</span><span class="tx">✕</span></div>
    <div class="tab"><svg class="fav"><use href="#drv"/></svg><span class="tt">My Drive - Goo</span><span class="tx">✕</span></div>
    <div class="tab active"><svg class="fav"><use href="#ons"/></svg><span class="tt">Living Hinge | F</span><span class="tx">✕</span></div>
    <div class="tab"><svg class="fav"><use href="#drv"/></svg><span class="tt">My Drive - Goo</span><span class="tx">✕</span></div>
    <div class="newtab"></div>
    <div class="profile"><span class="phead"></span><span class="pbody"></span></div>
    <div class="winbtns"><span class="wmin"></span><span class="wmax"></span><span class="wx">✕</span></div>
   </div>
   <div class="addr">
    <svg class="nav"><use href="#back"/></svg><svg class="nav off"><use href="#fwd"/></svg><svg class="nav"><use href="#rel"/></svg><svg class="nav"><use href="#hom"/></svg>
    <div class="omni">
     <svg class="lock"><use href="#lock"/></svg><span class="secure">Secure</span><span class="usep"></span>
     <span class="url"><b class="g">https://</b><b class="d">cad.onshape.com</b>/documents/0d2e845882700f81d1ae1a5f/w/9af348774c4e934fc87d84b0/e/f8f4b1d5e0272c7d7475c967</span>
     <span class="key"></span><span class="star">☆</span>
    </div>
    <div class="ext"><span class="abp">ABP<i>44</i></span><span class="css">CSS</span><span class="pdf"></span><span class="dots"></span></div>
   </div>
   <div class="ohead">
    <span class="logo">Onshape</span>
    <span class="burger"></span>
    <svg class="hi"><use href="#tre"/></svg>
    <svg class="hi"><use href="#dpl"/></svg>
    <span class="doc">Living Hinge</span><span class="main">Main</span>
    <svg class="globe"><use href="#glb"/></svg>
    <svg class="thumb"><use href="#thb"/></svg><span class="cnt">0</span>
    <svg class="link"><use href="#lnk"/></svg><span class="cnt">0</span>
    <svg class="clip"><use href="#clp"/></svg><span class="cnt">0</span>
    <div class="oright">
     <span class="chat"></span>
     <span class="bell"><i>1</i></span>
     <span class="obtn">App Store</span><span class="obtn share">Share</span>
     <span class="help">?</span><span class="caret"></span>
     <span class="avatar"></span><span class="user">Alex Snarski</span><span class="caret"></span>
    </div>
   </div>
   <div class="tools">
    <svg class="ti"><use href="#undo"/></svg><svg class="ti"><use href="#redo"/></svg><i class="sep"></i>
    <span class="sk"><svg class="skp"><use href="#pen"/></svg>Sketch</span><i class="sep"></i>
    <svg class="ti"><use href="#ext"/></svg><svg class="ti"><use href="#rev"/></svg><svg class="ti"><use href="#swp"/></svg><svg class="ti"><use href="#lft"/></svg><svg class="ti"><use href="#thk"/></svg><i class="sep"></i>
    <svg class="ti"><use href="#fil"/></svg><svg class="ti"><use href="#chm"/></svg><svg class="ti"><use href="#drf"/></svg><svg class="ti"><use href="#rib"/></svg><svg class="ti"><use href="#shl"/></svg><svg class="ti"><use href="#hol"/></svg><i class="sep"></i>
    <svg class="ti"><use href="#grd"/></svg><span class="bc"></span><svg class="ti"><use href="#prt"/></svg><i class="sep"></i>
    <svg class="ti"><use href="#boo"/></svg><svg class="ti"><use href="#spl"/></svg><svg class="ti"><use href="#xfm"/></svg><svg class="ti"><use href="#del"/></svg><i class="sep"></i>
    <svg class="ti"><use href="#bnd"/></svg><svg class="ti"><use href="#del"/></svg><svg class="ti"><use href="#imp"/></svg><svg class="ti"><use href="#imp"/></svg><i class="sep"></i>
    <svg class="ti"><use href="#prt"/></svg><svg class="ti"><use href="#plk"/></svg><svg class="ti"><use href="#ser"/></svg><span class="bc"></span><svg class="ti"><use href="#clk"/></svg><svg class="ti"><use href="#mat"/></svg><span class="ti fx">(x)</span><i class="sep"></i>
    <svg class="ti"><use href="#plk"/></svg><svg class="ti"><use href="#cnr"/></svg><svg class="ti"><use href="#smb"/></svg><svg class="ti"><use href="#tab"/></svg><svg class="ti"><use href="#hem"/></svg><svg class="ti"><use href="#cut"/></svg><i class="sep"></i>
    <svg class="ti"><use href="#plus"/></svg>
   </div>
   <div class="viewport">
    <svg class="canvas" viewBox="1925 286 1920 711" width="1920" height="711">
     <rect x="2644" y="304" width="780" height="693" fill="#f4f7fb"/>
     <path d="M3034 304V997M2644 695H3840" fill="none" stroke="#a8c1df" stroke-width="1.500"/>
     <use href="#hinge" transform="translate(2562 465.700)" fill="url(#bodyGrad)" stroke="#22262a" stroke-width="1.300"/>
     <path d="M2644 304V997H2644M2644 304H3424V997" fill="none" stroke="#fbbd77" stroke-width="2"/>
     <path d="M2645 695H3114M3034 466V857" fill="none" stroke="#4a78b8" stroke-opacity=".7" stroke-width="1.500"/>
     <text class="pl frt" x="2649" y="323">Front</text>
     <circle cx="3034" cy="695" r="4.500" fill="#fff" stroke="#111" stroke-width="2"/><circle cx="3034" cy="695" r="1.300" fill="#111"/>
     <g class="vc">
      <path d="M3754 327l7 9h-14zM3700 375l9-9v18zM3815 375l-9-9v18zM3754 446l-8-9h16z" fill="#e3e9f0"/>
      <rect x="3722" y="348" width="60" height="54" rx="8" fill="#e3e9f0"/><rect x="3731" y="356" width="44" height="38" rx="4" fill="#fff"/>
      <text class="vct fr" x="3740" y="379">Front</text>
      <path d="M3723 348V403M3723 403H3785" stroke="#4444dd" stroke-width="1.200"/><path d="M3723 403H3785" stroke="#e02b2b" stroke-width="1.200"/>
      <text class="axs" x="3716" y="342" fill="#4444dd">Z</text><text class="axs" x="3787" y="413" fill="#e02b2b">X</text>
      <path d="M3794 438l7-3 7 3v10l-7 3-7-3z" fill="#ddd" stroke="#333"/><path d="M3813 441h8l-4 4z" fill="#222"/>
     </g>
    </svg>
    <aside class="side">
     <div class="sh">Features (6)</div>
     <div class="filter">Filter by name or type</div>
     <div class="scrl"></div>
     <div class="row first"><span class="chev"></span>Default geometry</div>
     <div class="row sub"><i class="orig"></i>Origin</div>
     <div class="row sub"><svg class="pi"><use href="#plane"/></svg>Top</div>
     <div class="row sub"><svg class="pi"><use href="#plane"/></svg>Front</div>
     <div class="row sub"><svg class="pi"><use href="#plane"/></svg>Right</div>
     <div class="row top dim"><svg class="fi"><use href="#pen"/></svg>Sketch 1</div>
     <div class="row top"><svg class="fi"><use href="#ext"/></svg>Extrude 1</div>
     <div class="hbar"></div>
     <div class="parts">Parts (1)</div>
     <div class="row part">Part 1</div>
    </aside>
   </div>
  </div>
  <div class="vscroll"><span>⌃</span><span>⌄</span></div>
 </div>
 <div class="hscroll"><span class="ha">‹</span><span class="hthumb"></span><span class="ha hr">›</span></div>
 <div class="status">
  <div class="seg"><span class="gl">✥</span></div>
  <div class="seg"><span class="gl">⬚</span></div>
  <div class="seg"><span class="gl">⛶</span>3840 × 1080px</div>
  <div class="seg"><span class="gl">▣</span>Size: 203.3KB</div>
  <div class="zoom"><span class="zp">100%</span><span class="zb">−</span><span class="ztrack"><i></i></span><span class="zb">+</span></div>
 </div>
 <div class="taskbar tb2">
  <span class="tk"><svg class="wi"><use href="#win"/></svg></span>
  <span class="tk"><span class="cort"></span></span>
  <span class="tk"><svg><use href="#tv"/></svg></span>
  <span class="tk"><svg><use href="#exp"/></svg></span>
  <span class="tk run"><svg><use href="#stm"/></svg></span>
  <span class="tk"><svg><use href="#xxx"/></svg></span>
  <span class="tk run cur"><svg><use href="#chr"/></svg></span>
  <span class="tk"><svg><use href="#ovw"/></svg></span>
  <span class="tk"><svg><use href="#wac"/></svg></span>
  <span class="tk run"><svg><use href="#spo"/></svg></span>
  <span class="tk"><svg><use href="#ntp"/></svg></span>
  <span class="tk run"><svg><use href="#pur"/></svg></span>
  <span class="tk"><svg><use href="#net"/></svg></span>
  <span class="tk run"><svg><use href="#acr"/></svg></span>
  <span class="tk run"><svg><use href="#mlb"/></svg></span>
  <span class="tk run"><svg><use href="#rmn"/></svg></span>
  <span class="tk run"><svg><use href="#dsc"/></svg></span>
  <span class="tk run"><svg><use href="#pnt"/></svg></span>
  <div class="tray"><div class="clock"><span>3:00 PM</span><span>5/22/2017</span></div></div>
 </div>
</div>
</div>
</body>
</html>
```
FILE: styles.css
```css
*{box-sizing:border-box}
html,body{margin:0;padding:0;width:3840px;height:1080px;overflow:hidden;background:#000;font-family:"Liberation Sans",Arial,sans-serif;color:#333}
.defs{position:absolute}
i{font-style:normal}
.screen{display:flex;width:3840px;height:1080px}
.win{width:1920px;height:1080px;flex:none;display:flex;flex-direction:column;overflow:hidden;background:#fff}
.chrome{width:1920px;flex:1;min-height:0;display:flex;flex-direction:column;background:#fff}
.nested{flex:none;height:853px}

/* browser tabs */
.tabs{height:28px;flex:none;display:flex;align-items:flex-end;padding-left:6px;border-bottom:1px solid #a9a9a9;background:#fff;position:relative}
.tab{width:150px;height:27px;margin-right:-10px;flex:none;position:relative;display:flex;align-items:center;padding-left:15px;font-size:12px;color:#5a5a5a}
.tab::before{content:"";position:absolute;inset:0;background:#d7d7d7;border:1px solid #a9a9a9;border-bottom:0;border-radius:3px 3px 0 0;transform:perspective(50px) rotateX(18deg);transform-origin:bottom}
.tab.active{z-index:2;color:#333;height:28px;margin-bottom:-1px}
.tab.active::before{background:#f2f2f2}
.fav{width:16px;height:16px;flex:none;position:relative;margin-right:7px}
.tt{position:relative;width:84px;flex:none;white-space:nowrap;-webkit-mask-image:linear-gradient(90deg,#000 72%,transparent 96%);mask-image:linear-gradient(90deg,#000 72%,transparent 96%)}
.tx{position:relative;font-size:11px;margin-left:2px;color:#555}
.newtab{width:32px;height:18px;margin:0 0 5px 20px;background:#d7d7d7;border:1px solid #ccc;border-radius:2px;transform:skewX(14deg)}
.profile{position:absolute;left:1750px;top:0;width:24px;height:19px;background:#b5b5b5;display:flex;flex-direction:column;align-items:center;padding-top:3px}
.phead{width:6px;height:6px;border-radius:50%;background:#fff}
.pbody{width:12px;height:4px;background:#fff;border-radius:3px 3px 0 0;margin-top:1px}
.winbtns,.pctl{position:absolute;left:1790px;top:0;width:120px;height:28px;display:flex;align-items:center;gap:0;color:#222}
.wmin{width:12px;height:1px;background:currentColor;margin:0 22px 0 8px}
.wmax{width:10px;height:11px;border:1px solid currentColor;box-shadow:2px -2px 0 -1px #fff,2px -2px 0 0 currentColor;margin-right:27px}
.wx{font-size:15px}

/* address */
.addr{height:37px;flex:none;display:flex;align-items:center;background:#f2f2f2;border-bottom:1px solid #b5b5b5;padding-left:10px;position:relative}
.nav{width:16px;height:16px;margin-right:12px;color:#5a5a5a;flex:none}
.nav.off{color:#c9c9c9}
.omni{position:absolute;left:120px;width:1668px;margin-top:-1px;height:27px;background:#fff;border:1px solid #bdbdbd;border-bottom:2px solid #b0b0b0;border-radius:2px;display:flex;align-items:center;padding-left:9px;font-size:14px}
.lock{width:10px;height:14px;flex:none;margin-right:8px}
.secure{color:#0b8043;font-size:13.500px}
.usep{width:1px;height:20px;background:#bbb;margin:0 7px 0 11px}
.url{color:#7a7a7a;white-space:nowrap;font-size:14px;letter-spacing:-.1px;flex:1}
.url b{font-weight:400}.url .g{color:#0b8043}.url .d{color:#222}
.key{width:5px;height:16px;background:#555;margin-right:18px;border-radius:3px 3px 1px 1px}
.star{font-size:17px;margin-right:4px;color:#333}
.ext{position:absolute;left:1796px;top:6px;display:flex;align-items:center;gap:13px}
.abp{width:17px;height:17px;background:#c00;color:#fff;font-size:7px;font-weight:700;display:flex;align-items:center;justify-content:center;border-radius:5px;position:relative}
.abp i{position:absolute;left:8px;top:11px;width:14px;height:11px;font-size:8px;background:#555;text-align:center;line-height:11px}
.css{margin-left:6px;width:17px;height:17px;background:#c8c8c8;color:#f2f2f2;font-size:7px;text-align:center;line-height:14px}
.pdf{width:15px;height:19px;background:#cfcfcf}
.dots{width:3px;height:3px;margin-left:14px;background:#555;border-radius:50%;box-shadow:0 -6px #555,0 6px #555}

/* onshape header */
.ohead{height:41px;flex:none;display:flex;align-items:center;background:#f7f7f7;padding-left:6px;position:relative}
.logo{width:91px;flex:none;font:700 23px Roboto,sans-serif;letter-spacing:-1.150px;color:#1b5ea8}
.burger{width:17px;height:3px;flex:none;background:#333;box-shadow:0 -6px #333,0 6px #333;margin-right:11px}
.hi{width:22px;height:24px;margin-right:11px;flex:none}
.doc{margin-left:1px;font:500 22.500px Roboto,sans-serif;color:#333;width:134px;flex:none;white-space:nowrap}
.main{font:400 16px Roboto,sans-serif;color:#8b8b8b;width:72px;flex:none;padding-top:4px}
.globe{width:18px;height:18px;flex:none;margin-right:22px}
.thumb{width:17px;height:21px;flex:none;margin-right:8px}
.link{width:15px;height:21px;flex:none;margin:0 7px 0 16px}
.clip{width:16px;height:21px;flex:none;margin:0 8px 0 15px}
.cnt{font:400 15px Roboto,sans-serif;color:#8d8d8d;width:9px;flex:none}
.oright{position:absolute;left:1530px;top:5px;height:32px;display:flex;align-items:center}
.chat{width:20px;height:19px;background:#5f6b76;border-radius:50% 50% 50% 10%;margin-right:12px;margin-left:6px}
.bell{width:14px;height:20px;background:#5f6b76;border-radius:6px 6px 2px 2px;position:relative;margin-right:14px;margin-top:6px}
.bell i{position:absolute;left:3px;top:-12px;width:16px;height:16px;background:#4a8fd3;color:#fff;font:700 12px/16px Roboto,sans-serif;text-align:center;border-radius:2px}
.obtn{height:32px;width:85px;margin-right:8px;background:#1b5ea8;color:#fff;border-radius:3px;font:400 16px/32px Roboto,sans-serif;text-align:center}
.obtn.share{width:60px;margin-right:11px}
.help{width:18px;height:18px;border-radius:50%;background:#5f6b76;color:#fff;font:700 14px/18px Roboto,sans-serif;text-align:center}
.caret{width:0;height:0;border:4px solid transparent;border-top-color:#444;border-bottom:0;margin:0 11px 0 4px}
.avatar{width:24px;height:28px;margin-left:1px;border-radius:12px 12px 10px 10px;background:radial-gradient(circle at 50% 42%,#fff 0 7px,#1b5ea8 8px)}
.user{font:400 15px Roboto,sans-serif;color:#444;margin-left:3px;white-space:nowrap}
.user+.caret{margin:0 0 0 4px}

/* toolbar */
.tools{height:36px;flex:none;display:flex;align-items:center;padding-left:3px;background:#fff}
.ti{width:34px;height:24px;flex:none}
.fx{font:italic 700 15px/24px "Liberation Serif",serif;text-align:center;color:#222}
.sep{width:1px;height:30px;background:#ddd;margin:0 2px;flex:none}
.sk{width:85px;flex:none;display:flex;align-items:center;font:400 15px Roboto,sans-serif;color:#444}
.skp{width:20px;height:24px;margin:0 4px 0 6px;flex:none}
.bc{width:0;height:0;flex:none;border:4px solid transparent;border-top:5px solid #1b5ea8;border-bottom:0;margin:0 6px 0 4px}

/* viewport */
.viewport{flex:1;min-height:0;position:relative;overflow:hidden;background:#fff}
.canvas{display:block}
.pl{font:italic 15px Roboto,sans-serif;fill:#a8c1df}
.rgt{fill:#4a78b8;font-size:17px}
.frt{fill:#3566a8;font-style:normal;font-size:15px}
.vct{font:italic 11px Roboto,sans-serif;fill:#666}
.vct.fr{font-style:normal;fill:#444}
.axs{font:700 14px Roboto,sans-serif}
.side{position:absolute;left:0;top:1px;bottom:0;width:200px;background:#fff;box-shadow:2px 0 4px rgba(0,0,0,.18);font:400 13px Roboto,sans-serif;color:#444}
.sh{height:32px;padding:9px 0 0 10px}
.filter{margin-left:10px;width:180px;height:26px;border:2px solid #ccc;border-radius:2px;font-style:italic;color:#888;padding:3px 0 0 2px;font-size:12.500px}
.scrl{position:absolute;left:190px;top:63px;bottom:0;width:7px;background:#f4f6fa}
.row{height:26px;display:flex;align-items:center;position:relative;white-space:nowrap}
.first{height:22px;margin-top:4px;padding-left:16px}
.chev{width:7px;height:7px;border:solid #555;border-width:0 1.500px 1.500px 0;transform:rotate(45deg);margin:-3px 9px 0 1px}
.sub{padding-left:38px}
.pi{width:14px;height:14px;margin-right:5px;flex:none}
.orig{width:7px;height:7px;border:2px solid #aaa;border-radius:50%;margin:0 12px 0 5px}
.top{padding-left:13px}
.fi{width:15px;height:15px;margin-right:4px;flex:none}
.dim{color:#aaa}.dim .fi{opacity:.5}
.hbar{margin:5px 0 0 6px;width:165px;height:6px;background:#c4c4c4}
.parts{margin:360px 0 0 10px;height:26px;line-height:26px}
.part{padding-left:25px}

/* sheet tabs + downloads */
.sheets{height:31px;flex:none;background:#d0d0d0;display:flex;align-items:flex-start;padding-left:9px}
.sq{width:16px;height:15px;margin:8px 0 0;border-top:2px solid #666;border-bottom:2px solid #666;background:#aaa}
.sp{width:24px;text-align:center;font:700 24px/31px Roboto,sans-serif;color:#666;margin-left:11px}
.stab{width:199px;height:28px;margin-left:2px;background:#e6e6e6;border-radius:0 0 5px 5px;display:flex;align-items:center;padding-left:14px;font:400 15px Roboto,sans-serif;color:#777;box-shadow:0 1px 2px rgba(0,0,0,.2)}
.stab.on{background:#fff;color:#444;border-bottom:2px solid #1b5ea8;margin-left:7px;width:200px;padding-left:12px}
.si{width:20px;height:24px;margin-right:4px;flex:none}
.dl{height:48px;flex:none;background:#f1f1f1;display:flex;align-items:center;position:relative;border-top:1px solid #e4e4e4}
.dli{width:227px;height:36px;flex:none;border-right:1px solid #ccc;display:flex;align-items:center;padding-left:22px;font-size:13px;color:#222}
.file{width:12px;height:17px;background:linear-gradient(#fff 0 30%,#1a73e8 30% 70%,#fff 70%);border:1px solid #bbb;margin-right:15px;flex:none;margin-top:-8px}
.dn{width:132px;white-space:nowrap;flex:none}
.up{width:8px;height:8px;border:solid #555;border-width:1.500px 0 0 1.500px;transform:rotate(45deg);flex:none}
.showall{position:absolute;left:1806px;top:8px;width:77px;height:28px;background:#f8f8f8;border:1px solid #bbb;border-radius:2px;font-size:13px;line-height:26px;text-align:center;color:#222}
.dlx{position:absolute;left:1896px;top:13px;font-size:15px;color:#555}

/* taskbar */
.taskbar{height:40px;flex:none;background:#000;display:flex;align-items:stretch;position:relative;color:#fff}
.tk{width:49px;flex:none;display:flex;align-items:center;justify-content:center;position:relative}
.tk svg{width:25px;height:25px}
.tk .wi{width:16px;height:16px}
.run::after{content:"";position:absolute;left:4px;right:4px;bottom:0;height:2px;background:#76b9ed}
.cur{background:#333}
.search{width:344px;flex:none;background:#333;display:flex;align-items:center;padding-left:10px;position:relative;color:#aaa;font-size:14px}
.cort{width:20px;height:20px;border:3px solid #fff;border-radius:50%;flex:none;display:block}
.stxt{margin-left:6px;font-family:"Open Sans",sans-serif;font-size:14px}
.mic{position:absolute;left:318px;top:12px;width:9px;height:15px;border:1px solid #999;border-radius:5px}
.search .cort{width:21px;height:21px}
.taskbar>.tk:first-child{width:48px}
.tray{position:absolute;right:0;top:0;bottom:0;display:flex;align-items:center}
.tup{width:8px;height:8px;border:solid #fff;border-width:1.500px 0 0 1.500px;transform:rotate(45deg);margin:4px 13px 0 0}
.tnet{width:13px;height:16px;border:1.500px solid #fff;margin-right:12px}
.tvol{width:10px;height:14px;border-left:5px solid #fff;margin-right:3px}
.clock{display:flex;flex-direction:column;align-items:center;font-size:12.500px;line-height:19px;color:#ddd;width:72px;margin-right:8px}
.note{width:15px;height:17px;background:#fff;margin-right:25px}
.tb2 .clock{margin-right:0;width:72px}
.tb2 .tray{right:-4px}
.tb2 .tk:nth-child(2) .cort{width:16px;height:18px}
.tb2>.tk:first-child{width:50px}

/* paint */
.paint{background:#f5f6f7}
.ptitle{height:23px;flex:none;background:#fff;display:flex;align-items:center;position:relative}
.qa{width:18px;height:20px}
.qs{width:1px;height:17px;background:#bbb;margin:0 8px}
.qsave{width:14px;height:16px;background:linear-gradient(#5d4a9c 0 55%,#ddd 55%);margin:0 6px}
.qb{width:17px;height:17px;margin-right:4px}
.qc{width:0;height:0;border:4px solid transparent;border-top-color:#333;border-bottom:0;margin:0 0 0 4px}
.pname{font:400 13.500px "Open Sans",sans-serif;color:#a0a0a0;white-space:nowrap}
.pctl{left:1790px;height:23px;color:#888}
.rtabs{height:23px;flex:none;background:#fff;display:flex;align-items:stretch;border-bottom:1px solid #dadbdc;position:relative;font:400 13px Roboto,sans-serif;color:#333}
.file-tab{width:56px;background:#1979ca;color:#fff;text-align:center;line-height:23px}
.rt{width:58px;text-align:center;line-height:23px}
.rt.on{background:#f5f6f7;border:1px solid #dadbdc;border-bottom-color:#f5f6f7;height:24px}
.rup{position:absolute;left:1884px;top:10px;width:6px;height:6px;border:solid #888;border-width:1px 0 0 1px;transform:rotate(45deg)}
.rq{position:absolute;left:1902px;top:3px;width:15px;height:17px;border-radius:50%;background:#1979ca;color:#fff;font:700 13px/17px Roboto,sans-serif;text-align:center}
.ribbon{height:92px;flex:none;display:flex;background:#f5f6f7;font:400 13px Roboto,sans-serif;color:#3c3c3c;padding-top:3px}
.grp{height:87px;border-right:1px solid #e0e1e2;display:flex;flex-direction:column;flex:none}
.grp label{height:17px;text-align:center;line-height:17px;color:#555;flex:none}
.gb{flex:1;display:flex;min-height:0}
.g1{width:107px}.g2{width:121px}.g3{width:81px}.g4{width:56px}.g5{width:247px}.g6{width:53px}.g7{width:356px}
.big{width:52px;display:flex;flex-direction:column;align-items:center;padding-top:5px;white-space:nowrap}
.dn2{width:0;height:0;border:3px solid transparent;border-top:4px solid #333;border-bottom:0;margin-top:6px;display:block}
.dn2.lt{border-top-color:#bbb}
.paste{width:26px;height:31px;margin-bottom:2px;background:repeating-linear-gradient(#f3e3b5 0 3px,#fff 3px 5px);border:2px solid #a5855a;border-radius:3px}
.small{display:flex;flex-direction:column;padding-top:6px;white-space:nowrap;line-height:22px}
.dimt{color:#999}
.ib{color:#2a6fb0}
.sel{width:41px;height:66px;margin:2px 8px 0 4px;border:1px solid #7eb4ea;background:#cde4f7;display:flex;flex-direction:column;flex:none}
.selt{height:37px;border-bottom:1px solid #7eb4ea;padding:6px 4px 0}
.selt span{display:block;height:24px;border:1px dotted #1f3a63;background:#d9ebfa}
.selb{display:flex;flex-direction:column;align-items:center;padding-top:4px}
.toolgrid{display:grid;grid-template-columns:repeat(3,24px);grid-template-rows:30px 30px;justify-items:center;align-items:center;padding:10px 0 0 4px}
.c-pen{width:5px;height:20px;background:#e2b23c;transform:rotate(25deg)}
.c-fill{width:13px;height:18px;background:#9cc4ec;transform:rotate(-20deg);border-bottom:4px solid #e05a3a}
.c-a{font:700 19px "Liberation Serif",serif;color:#2b4a76}
.c-era{width:17px;height:11px;background:#f09ca0;transform:rotate(-30deg);border-left:5px solid #ddd}
.c-drop{width:5px;height:20px;background:#2f6cb0;transform:rotate(30deg)}
.c-mag{width:12px;height:12px;border:2px solid #888;border-radius:50%;background:#dcecfa;margin:-6px 0 0 -3px}
.brush{width:32px;height:32px;margin-bottom:2px;background:linear-gradient(135deg,#f3f3f3 0 40%,#e0772a 40% 65%,#fff 65%);border:1px solid #999}
.gallery{width:158px;height:60px;margin:5px 5px 0 6px;display:flex;border:1px solid #ccc;background:#fbfcfd;flex:none}
.shapes{flex:none}
.gscroll{flex:1;display:flex;flex-direction:column;align-items:center;justify-content:space-around;border-left:1px solid #ddd;font-size:9px;color:#777}
.outl{font-size:13.500px}
.sizes{width:33px;height:32px;display:flex;flex-direction:column;justify-content:space-between;margin-bottom:2px;padding-top:5px}
.sizes i{display:block;background:#7a8db0}
.sizes i:nth-child(1){height:2px}.sizes i:nth-child(2){height:4px}.sizes i:nth-child(3){height:7px}
.col1{width:42px;height:66px;margin:2px 4px 0 4px;background:#cde4f7;border:1px solid #7eb4ea;display:flex;flex-direction:column;align-items:center;text-align:center;line-height:13px;flex:none;padding-top:4px}
.col2{width:32px;height:66px;margin:2px 0 0 0;display:flex;flex-direction:column;align-items:center;text-align:center;line-height:13px;flex:none;padding-top:7px;font-size:13px}
.col1 span:last-child,.col2 span:last-child{margin-top:5px}
.sw{display:block;flex:none}
.black{width:30px;height:33px;background:#000;border:1px solid #666;outline:1px solid #fff}
.white{width:24px;height:27px;background:#fff;border:1px solid #888}
.pal{display:grid;grid-template-columns:repeat(10,20px);grid-auto-rows:20px;gap:2px;margin:3px 0 0 2px;flex:none}
.pal i{border:1px solid #b5b5b5;outline:1px solid #fff;outline-offset:-2px;background:#f5f6f7}
.c01{background:#000!important}.c02{background:#7f7f7f!important}.c03{background:#880015!important}.c04{background:#ed1c24!important}.c05{background:#ff7f27!important}.c06{background:#fff200!important}.c07{background:#22b14c!important}.c08{background:#00a2e8!important}.c09{background:#3f48cc!important}.c10{background:#a349a4!important}
.c11{background:#fff!important}.c12{background:#c3c3c3!important}.c13{background:#b97a57!important}.c14{background:#ffaec9!important}.c15{background:#ffc90e!important}.c16{background:#efe4b0!important}.c17{background:#b5e61d!important}.c18{background:#99d9ea!important}.c19{background:#7092be!important}.c20{background:#c8bfe7!important}
.edit{width:40px;margin-left:4px;display:flex;flex-direction:column;align-items:center;text-align:center;line-height:13px;flex:none;padding-top:6px}
.rainbow{width:28px;height:30px;border:1px solid #999;background:linear-gradient(transparent,#888),linear-gradient(90deg,#f00,#ff0,#0f0,#0ff,#00f,#f0f);margin-bottom:6px}
.work{flex:1;min-height:0;position:relative;overflow:hidden;background:#c9d3e3;padding:6px 0 0 5px;display:flex}
.vscroll{position:absolute;left:1903px;top:6px;bottom:0;width:17px;background:#fff;border-left:1px solid #f0f0f0;display:flex;flex-direction:column;justify-content:space-between;align-items:center;color:#666;font-size:14px}
.hscroll{height:17px;flex:none;background:#f0f0f0;display:flex;align-items:stretch;padding-top:1px;color:#666;font-size:16px;line-height:14px}
.ha{width:17px;text-align:center;flex:none}
.hthumb{width:924px;background:#cdcdcd;flex:none}
.hr{margin-left:auto;margin-right:8px}
.status{height:26px;flex:none;display:flex;background:#f0f0f0;border-top:2px solid #d9d9d9;font:400 13px Roboto,sans-serif;color:#333;position:relative}
.seg{width:156px;flex:none;height:22px;margin-top:1px;border-right:1px solid #d9d9d9;display:flex;align-items:center;padding-left:4px;white-space:nowrap}
.gl{width:19px;color:#2a4a76;font-size:14px;flex:none}
.zoom{position:absolute;left:1722px;top:1px;width:198px;height:22px;border-left:1px solid #d9d9d9;display:flex;align-items:center;padding-left:21px}
.zp{width:34px;flex:none}
.zb{width:16px;height:16px;flex:none;border:1px solid #888;border-radius:50%;text-align:center;line-height:13px;font-size:13px;margin-left:3px}
.ztrack{width:83px;height:5px;margin:0 12px 0 8px;background:#e0e3e5;border:1px solid #ccc;position:relative;flex:none}
.ztrack i{position:absolute;left:36px;top:-8px;width:10px;height:17px;background:#0078d7;clip-path:polygon(0 0,100% 0,100% 75%,50% 100%,0 75%)}
```
